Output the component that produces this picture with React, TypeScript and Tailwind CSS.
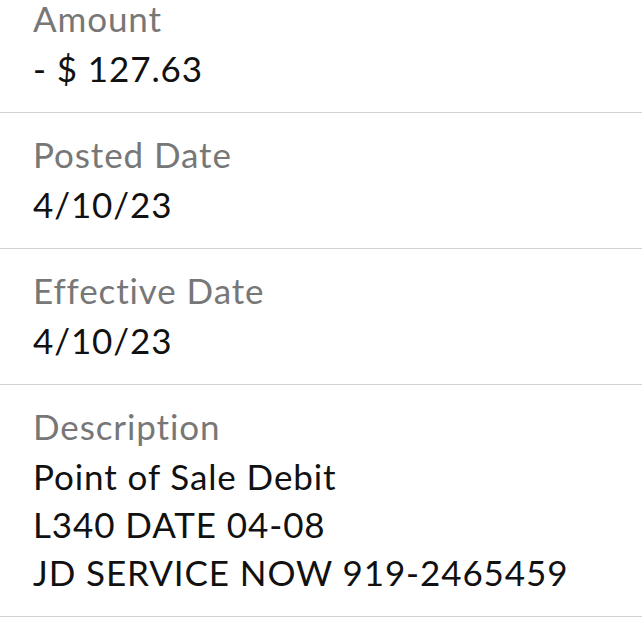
import React from "react";

type Field = { label: string; lines: string[] };

const fields: Field[] = [
  { label: "Amount", lines: ["- $ 127.63"] },
  { label: "Posted Date", lines: ["4/10/23"] },
  { label: "Effective Date", lines: ["4/10/23"] },
  {
    label: "Description",
    lines: ["Point of Sale Debit", "L340 DATE 04-08", "JD SERVICE NOW 919-2465459"],
  },
];

const App = () => {
  return (
    <div className="min-h-screen bg-white overflow-hidden font-['Lato','Open_Sans',sans-serif] tracking-[0.9px]">
      {fields.map((f, i) => (
        <div
          key={f.label}
          className={
            i === 0
              ? "border-b border-[#d2d2d2] pl-[33px] pb-[20px]"
              : "border-b border-[#d2d2d2] pl-[33px] pt-[15px] pb-[20px]"
          }
        >
          <div
            className={
              i === 0
                ? "text-[35px] leading-[36px] mb-[8px] text-[#777777]"
                : "text-[35px] leading-[52px] text-[#777777]"
            }
          >
            {f.label}
          </div>
          {f.lines.map((line) => (
            <div key={line} className="text-[35px] leading-[48px] text-[#111111]">
              {line}
            </div>
          ))}
        </div>
      ))}
    </div>
  );
};

export default App;
